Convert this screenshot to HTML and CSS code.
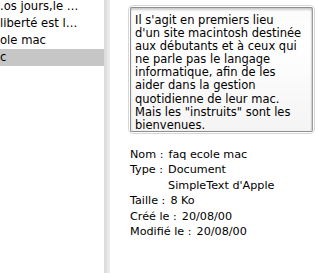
FILE: index.html
```html
<!DOCTYPE html>
<html lang="fr">
<head>
<meta charset="utf-8">
<title>faq ecole mac</title>
<link rel="stylesheet" href="styles.css">
</head>
<body>
<div class="browser">
  <ul class="list">
    <li class="item">.os jours,le …</li>
    <li class="item">liberté est l…</li>
    <li class="item">ole mac</li>
    <li class="item selected">c</li>
  </ul>
  <div class="divider"></div>
  <div class="preview">
    <div class="box">
      <div class="box-inner">Il s'agit en premiers lieu<br>d'un site macintosh destinée<br>aux débutants et à ceux qui<br>ne parle pas le langage<br>informatique, afin de les<br>aider dans la gestion<br>quotidienne de leur mac.<br>Mais les "instruits" sont les<br>bienvenues.</div>
    </div>
    <div class="info">
      <div class="row"><span class="label">Nom :</span><span class="value">faq ecole mac</span></div>
      <div class="row"><span class="label">Type :</span><span class="value">Document<br>SimpleText d'Apple</span></div>
      <div class="row"><span class="label">Taille :</span><span class="value">8 Ko</span></div>
      <div class="row"><span class="label">Créé le :</span><span class="value">20/08/00</span></div>
      <div class="row"><span class="label">Modifié le :</span><span class="value">20/08/00</span></div>
    </div>
  </div>
</div>
</body>
</html>
```

FILE: styles.css
```css
html, body {
  margin: 0;
  padding: 0;
  background: #ffffff;
}
body {
  width: 318px;
  height: 273px;
  overflow: hidden;
  font-family: "DejaVu Sans", Verdana, sans-serif;
  color: #000;
}
.browser {
  display: flex;
  height: 273px;
}
.list {
  list-style: none;
  margin: -2px 0 0 0;
  padding: 0;
  width: 104px;
  flex: none;
  background: #fff;
}
.item {
  height: 17px;
  line-height: 17px;
  font-size: 11.6px;
  white-space: nowrap;
  overflow: hidden;
}
.item.selected {
  background: #c6c6c6;
}
.divider {
  width: 6px;
  flex: none;
  background: linear-gradient(to right, #d9d9d9, #e6e6e6 60%, #eeeeee);
}
.preview {
  flex: 1;
  padding: 5px 0 0 18px;
}
.box {
  width: 183px;
  border: 1px solid #d6d6d6;
  border-radius: 5px;
  padding: 1px;
}
.box-inner {
  border: 1px solid #8e8e8e;
  border-radius: 2px;
  border-right-color: #9a9a9a;
  box-shadow: inset 0 2px 2px rgba(0, 0, 0, 0.18), inset -1px 0 1px rgba(0, 0, 0, 0.12);
  background: linear-gradient(#fbfbfb, #ffffff 30%, #f4f4f4);
  height: 112px;
  padding: 6px 0 5px 4px;
  font-size: 11.5px;
  line-height: 13.1px;
  white-space: nowrap;
}
.info {
  margin-top: 13px;
  margin-left: 2px;
  font-size: 11.2px;
  line-height: 15.4px;
}
.row {
  display: flex;
}
.label {
  margin-right: 5px;
}
```
